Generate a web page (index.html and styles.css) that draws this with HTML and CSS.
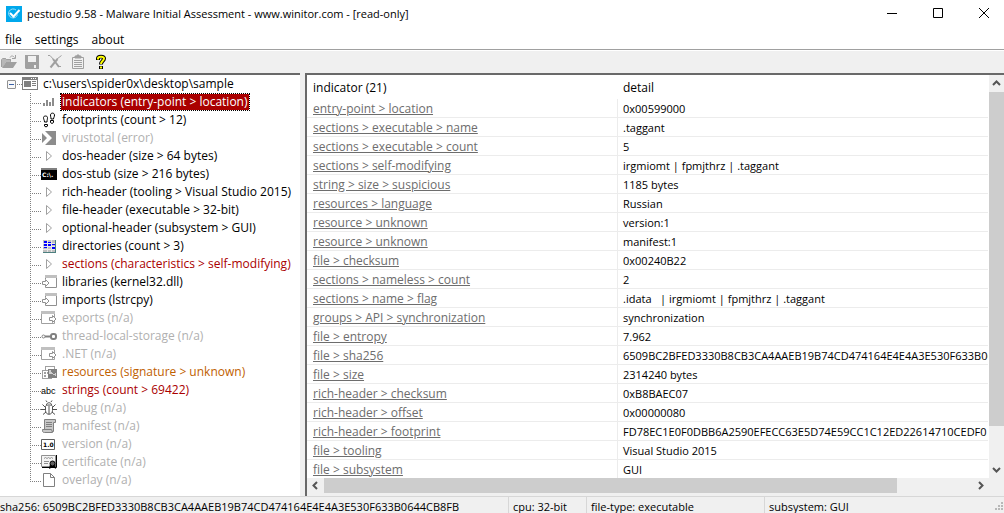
FILE: index.html
```
<!DOCTYPE html>
<html lang="en">
  <head>
    <meta charset="UTF-8" />
    <title>pestudio 9.58</title>
    <link rel="stylesheet" href="styles.css">
  </head>
  <body>
    <svg class="sprite" aria-hidden="true">
      <symbol id="arrow" viewBox="0 0 16 16">
        <path d="M5.5 3.500v9l5-4.500z" fill="#fff" stroke="#a0a0a0" />
      </symbol>
      <symbol id="import" viewBox="0 0 16 16">
        <path d="M4.500 5V2.500h11v11h-11V11" fill="#fff" stroke="#909090" />
        <path d="M4 1h12v3H4z" fill="#c0c0c0" shape-rendering="crispEdges" />
        <path d="M1.500 7.500h3v-2l3.500 3.500-3.500 3.500v-2h-3z" fill="#fff" stroke="#909090" />
      </symbol>
      <symbol id="export" viewBox="0 0 16 16">
        <path d="M.5 3v10.500h13V3" fill="#fff" stroke="#a0a0a0" />
        <path d="M0 1h14v3H0z" fill="#c0c0c0" shape-rendering="crispEdges" />
        <path d="M8.500 7.500h3v-2l3.500 3.500-3.500 3.500v-2h-3z" fill="#fff" stroke="#909090" />
      </symbol>
    </svg>

    <header class="titlebar">
      <svg class="logo" width="16" height="16" viewBox="0 0 16 16">
        <path d="M0 0h16v16H0z" fill="#00a8ec" />
        <path d="M11.500 8.500a4.500 4.500 0 1 1-1.500-4.500" fill="none" stroke="#9be0fa" />
        <path d="M4 7l3.500 3.500L13.500 4" fill="none" stroke="#fff" stroke-width="2" />
      </svg>
      <h1>pestudio 9.58 - Malware Initial Assessment - www.winitor.com - [read-only]</h1>
      <div class="window-buttons">
        <button type="button" aria-label="Minimize">
          <svg width="12" height="12" viewBox="0 0 12 12"><path d="M1 5.500h10" /></svg>
        </button>
        <button type="button" aria-label="Maximize">
          <svg width="12" height="12" viewBox="0 0 12 12"><path d="M1.500 .5h9v9h-9z" /></svg>
        </button>
        <button type="button" aria-label="Close">
          <svg width="12" height="12" viewBox="0 0 12 12"><path d="M1 0l10 10M11 0L1 10" /></svg>
        </button>
      </div>
    </header>

    <nav class="menu">
      <button type="button">file</button>
      <button type="button">settings</button>
      <button type="button">about</button>
    </nav>

    <div class="toolbar">
      <button type="button" aria-label="Open">
        <svg width="16" height="16" viewBox="0 0 16 16" fill="#a0a0a0">
          <path d="M1 13V5h1V4h3v1h5v3H5l-3 5z" fill="#b8b8b8" />
          <path d="M.5 13V5.500l1-1h3l1 1h4v2" fill="none" stroke="#a0a0a0" />
          <path d="M1 14l4-6h11l-4 6z" />
          <path d="M9 3.500c1-2 3-2 4.500 0M14.500 1v3.500H11" fill="none" stroke="#a0a0a0" />
        </svg>
      </button>
      <button type="button" aria-label="Save">
        <svg width="16" height="16" viewBox="0 0 16 16" fill="#a0a0a0">
          <path d="M1 1h14v14H2l-1-1z" />
          <path d="M4 2h8v6H4zM10 11h2v3h-2z" fill="#f0f0f0" />
        </svg>
      </button>
      <button type="button" aria-label="Delete">
        <svg width="16" height="16" viewBox="0 0 16 16" fill="none" stroke="#a0a0a0">
          <path d="M1 1.500h2l4 4.500M14.500 1.500L10 5" />
          <path d="M6 5l6 8M10.500 5L3.500 13.500" stroke-width="2" />
          <path d="M11 12.500h3" />
        </svg>
      </button>
      <button type="button" aria-label="Copy">
        <svg width="16" height="16" viewBox="0 0 16 16" fill="none" stroke="#a0a0a0">
          <path d="M2.500 3.500h11v11h-11z" />
          <path d="M5 2h6v2H5zM7 1h2v1H7z" fill="#a0a0a0" />
          <path d="M4 6.500h8M4 8.500h8M4 10.500h8M4 12.500h8" />
        </svg>
      </button>
      <button type="button" aria-label="Help">
        <svg width="16" height="16" viewBox="0 0 16 16" fill="none">
          <path d="M5 6V4.500C5 2 11 2 11 4.500 11 7 8 7 8 10.500M8 12v3" stroke="#000" stroke-width="4" />
          <path d="M5 5.500v-1C5 2 11 2 11 4.500 11 7 8 7 8 10M8 12.500v2" stroke="#ffff00" stroke-width="2" />
        </svg>
      </button>
    </div>

    <main class="workspace">
      <section class="tree-panel">
        <div class="tree-root">
          <button type="button" class="expander" aria-label="Collapse"></button>
          <svg width="16" height="16" viewBox="0 0 16 16" shape-rendering="crispEdges">
            <path d="M0 1h16v13H0z" fill="#808080" />
            <path d="M1 4h14v9H1z" fill="#fff" />
            <path d="M9 2h1v1H9zM11 2h1v1h-1zM13 2h1v1h-1z" fill="#fff" />
            <path d="M2 5h7v6H2zM10 5h4v1h-4zM10 7h4v1h-4zM10 9h4v1h-4z" fill="#808080" />
          </svg>
          <span class="label">c:\users\spider0x\desktop\sample</span>
        </div>
        <ul class="tree">
          <li class="selected">
            <svg viewBox="0 0 16 16" shape-rendering="crispEdges"><path d="M2 9h2v3H2zM5 6h2v6H5zM8 8h2v4H8zM11 4h2v8h-2z" fill="#8c8c8c" /></svg>
            <span class="label">indicators (entry-point &gt; location)</span>
          </li>
          <li>
            <svg viewBox="0 0 16 16" fill="#fff" stroke="#000">
              <path d="M2.500 5.500c0-2 4-2 4 0 0 2-.5 2.500-.5 4.500H3.500c0-2-1-2.500-1-4.500zM3.500 12.500h3v1.500c0 1-3 1-3 0zM9.500 3c0-2.500 4-2.500 4 0 0 2-1 2.500-1 4H10c0-2-.5-2-.5-4zM9.500 8.500h3v2c0 1-3 1-3 0z" />
            </svg>
            <span class="label">footprints (count &gt; 12)</span>
          </li>
          <li class="off">
            <svg viewBox="0 0 16 16"><path d="M1 1h14v14H1z" fill="#8c8c8c" /><path d="M1 1h3l7 7-7 7H1v-2l5-5-5-5z" fill="#fff" /></svg>
            <span class="label">virustotal (error)</span>
          </li>
          <li>
            <svg><use href="#arrow" /></svg>
            <span class="label">dos-header (size &gt; 64 bytes)</span>
          </li>
          <li>
            <svg viewBox="0 0 16 16">
              <path d="M0 2h16v12H0z" />
              <path d="M0 2h16v2H0z" fill="#808080" />
              <text class="prompt" x="1" y="11">C:\.</text>
            </svg>
            <span class="label">dos-stub (size &gt; 216 bytes)</span>
          </li>
          <li>
            <svg><use href="#arrow" /></svg>
            <span class="label">rich-header (tooling &gt; Visual Studio 2015)</span>
          </li>
          <li>
            <svg><use href="#arrow" /></svg>
            <span class="label">file-header (executable &gt; 32-bit)</span>
          </li>
          <li>
            <svg><use href="#arrow" /></svg>
            <span class="label">optional-header (subsystem &gt; GUI)</span>
          </li>
          <li>
            <svg viewBox="0 0 16 16" shape-rendering="crispEdges">
              <path d="M2 2h13v13H2z" fill="#4d8080" />
              <path d="M2 2h12v12H2z" fill="#c0c0c0" />
              <path d="M6 2h1v12H6zM10 2h1v12h-1zM2 5h12v1H2zM2 8h12v1H2zM2 11h12v1H2z" fill="#e8e8e8" />
              <path d="M3 3h3v2H3zM3 6h3v2H3zM7 4h3v1H7zM7 6h3v2H7zM3 9h3v1H3zM11 9h3v2h-3zM11 6h3v1h-3z" fill="#0000ff" />
            </svg>
            <span class="label">directories (count &gt; 3)</span>
          </li>
          <li class="alert">
            <svg><use href="#arrow" /></svg>
            <span class="label">sections (characteristics &gt; self-modifying)</span>
          </li>
          <li>
            <svg><use href="#import" /></svg>
            <span class="label">libraries (kernel32.dll)</span>
          </li>
          <li>
            <svg><use href="#import" /></svg>
            <span class="label">imports (lstrcpy)</span>
          </li>
          <li class="off">
            <svg><use href="#export" /></svg>
            <span class="label">exports (n/a)</span>
          </li>
          <li class="off">
            <svg viewBox="0 0 16 16" fill="#fff" stroke="#808080">
              <path d="M4 8.500h6" stroke-width="2" />
              <circle cx="2.500" cy="8.500" r="1.500" />
              <rect x="10" y="6" width="5" height="5" rx="2" stroke-width="2" />
            </svg>
            <span class="label">thread-local-storage (n/a)</span>
          </li>
          <li class="off">
            <svg><use href="#export" /></svg>
            <span class="label">.NET (n/a)</span>
          </li>
          <li class="warn">
            <svg viewBox="0 0 16 16" shape-rendering="crispEdges">
              <path d="M4.500 2.500h9v4h-9zM1.500 6.500h9v8h-9z" fill="#fff" stroke="#a0a0a0" />
              <path d="M3 8h2v2H3zM3 11h2v2H3zM6 8h1v2H6z" fill="#a0a0a0" />
              <path d="M7.500 5.500h8v8h-8z" fill="#d0d0d0" stroke="#808080" />
              <path d="M10 6h5v3l-2 1-3-2zM8 10h3l4 2v1H8z" fill="#808080" />
            </svg>
            <span class="label">resources (signature &gt; unknown)</span>
          </li>
          <li class="alert">
            <svg viewBox="0 0 16 16"><text class="abc" x="0" y="12">abc</text></svg>
            <span class="label">strings (count &gt; 69422)</span>
          </li>
          <li class="off">
            <svg viewBox="0 0 16 16" fill="none" stroke="#505050">
              <path d="M4.500 6.500c0-2 7-2 7 0v4c0 5-7 5-7 0zM5.500 5c0-3 5-3 5 0M8 6v8M6 2L5 .5M10 2l1-1.500M4 7L1.500 4.500M12 7l2.500-2.500M4 9.500H0M12 9.500h4M5 12l-3 2.500M11 12l3 2.500" />
            </svg>
            <span class="label">debug (n/a)</span>
          </li>
          <li class="off">
            <svg viewBox="0 0 16 16" fill="#c8c8c8" stroke="#808080">
              <path d="M3.500 1.500h11v3h-2v9h-9z" />
              <path d="M1.500 11.500h9l1 3h-8c-2 0-2-1-2-3z" />
              <path d="M5 4.500h6M5 6.500h6M5 8.500h6" />
            </svg>
            <span class="label">manifest (n/a)</span>
          </li>
          <li class="off">
            <svg viewBox="0 0 16 16"><path d="M.5 3.500h13v10H.5z" fill="#fff" stroke="#606060" /><text class="number" x="2" y="11">1.0</text></svg>
            <span class="label">version (n/a)</span>
          </li>
          <li class="off">
            <svg viewBox="0 0 16 16">
              <path d="M.5 1.500h14v11H.5z" fill="#f4f4f4" stroke="#909090" />
              <path d="M15.500 1v12.500H1" fill="none" stroke="#000" />
              <path d="M3 4.500l1.500-1L6 4.500l1.500-1L9 4.500l1.500-1L12 4.500M3 7.500h5M3 9.500h4" fill="none" stroke="#909090" />
              <path d="M8 15l1-5h5l1 5-3-2z" />
              <circle cx="11.500" cy="9.500" r="2.500" fill="#606060" stroke="#000" />
            </svg>
            <span class="label">certificate (n/a)</span>
          </li>
          <li class="off">
            <svg viewBox="0 0 16 16"><path d="M2.500 1.500h7l4 4v9h-11zM9.500 1.500v4h4" fill="#fff" stroke="#808080" /></svg>
            <span class="label">overlay (n/a)</span>
          </li>
        </ul>
      </section>

      <section class="data-panel">
        <div class="table-view">
          <table>
            <thead>
              <tr><th class="name">indicator (21)</th><th>detail</th></tr>
            </thead>
            <tbody>
              <tr><td><a href="#">entry-point &gt; location</a></td><td>0x00599000</td></tr>
              <tr><td><a href="#">sections &gt; executable &gt; name</a></td><td>.taggant</td></tr>
              <tr><td><a href="#">sections &gt; executable &gt; count</a></td><td>5</td></tr>
              <tr><td><a href="#">sections &gt; self-modifying</a></td><td>irgmiomt | fpmjthrz | .taggant</td></tr>
              <tr><td><a href="#">string &gt; size &gt; suspicious</a></td><td>1185 bytes</td></tr>
              <tr><td><a href="#">resources &gt; language</a></td><td>Russian</td></tr>
              <tr><td><a href="#">resource &gt; unknown</a></td><td>version:1</td></tr>
              <tr><td><a href="#">resource &gt; unknown</a></td><td>manifest:1</td></tr>
              <tr><td><a href="#">file &gt; checksum</a></td><td>0x00240B22</td></tr>
              <tr><td><a href="#">sections &gt; nameless &gt; count</a></td><td>2</td></tr>
              <tr><td><a href="#">sections &gt; name &gt; flag</a></td><td>.idata   | irgmiomt | fpmjthrz | .taggant</td></tr>
              <tr><td><a href="#">groups &gt; API &gt; synchronization</a></td><td>synchronization</td></tr>
              <tr><td><a href="#">file &gt; entropy</a></td><td>7.962</td></tr>
              <tr><td><a href="#">file &gt; sha256</a></td><td>6509BC2BFED3330B8CB3CA4AAEB19B74CD474164E4E4A3E530F633B0644CB8FB</td></tr>
              <tr><td><a href="#">file &gt; size</a></td><td>2314240 bytes</td></tr>
              <tr><td><a href="#">rich-header &gt; checksum</a></td><td>0xB8BAEC07</td></tr>
              <tr><td><a href="#">rich-header &gt; offset</a></td><td>0x00000080</td></tr>
              <tr><td><a href="#">rich-header &gt; footprint</a></td><td>FD78EC1E0F0DBB6A2590EFECC63E5D74E59CC1C12ED22614710CEDF0</td></tr>
              <tr><td><a href="#">file &gt; tooling</a></td><td>Visual Studio 2015</td></tr>
              <tr><td><a href="#">file &gt; subsystem</a></td><td>GUI</td></tr>
            </tbody>
          </table>
        </div>
        <div class="scrollbar vertical">
          <button type="button" aria-label="Scroll up"><svg viewBox="0 0 9 9"><path d="M1 6l3.500-3.500L8 6" /></svg></button>
          <div class="thumb"></div>
          <button type="button" aria-label="Scroll down"><svg viewBox="0 0 9 9"><path d="M1 3l3.500 3.500L8 3" /></svg></button>
        </div>
        <div class="scrollbar horizontal">
          <button type="button" aria-label="Scroll left"><svg viewBox="0 0 9 9"><path d="M6 1L2.500 4.500 6 8" /></svg></button>
          <div class="thumb"></div>
          <button type="button" aria-label="Scroll right"><svg viewBox="0 0 9 9"><path d="M3 1l3.500 3.500L3 8" /></svg></button>
        </div>
      </section>
    </main>

    <footer class="statusbar">
      <span>sha256: 6509BC2BFED3330B8CB3CA4AAEB19B74CD474164E4E4A3E530F633B0644CB8FB</span>
      <span>cpu: 32-bit</span>
      <span>file-type: executable</span>
      <span>subsystem: GUI</span>
      <svg class="grip" width="12" height="12" viewBox="0 0 12 12" fill="#b8b8b8"><path d="M9 1h2v2H9zM6 4h2v2H6zM9 4h2v2H9zM3 7h2v2H3zM6 7h2v2H6zM9 7h2v2H9z" /></svg>
    </footer>
  </body>
</html>
```
FILE: styles.css
```
* {
  box-sizing: border-box;
}

body {
  margin: 0;
  height: 100vh;
  display: flex;
  flex-direction: column;
  overflow: hidden;
  background-color: #f0f0f0;
  color: #000;
  font-family: "Segoe UI", "Open Sans", sans-serif;
  font-size: 12px;
  line-height: 18px;
}

button {
  margin: 0;
  padding: 0;
  border: 0;
  background: none;
  color: inherit;
  font: inherit;
}

svg {
  display: block;
  flex: none;
}

.sprite {
  display: none;
}

.titlebar {
  display: flex;
  align-items: center;
  height: 28px;
  padding-left: 6px;
  background-color: #fff;
}

.titlebar h1 {
  margin: 0;
  padding-left: 5px;
  flex: 1;
  font-size: 11px;
  font-weight: normal;
}

.window-buttons {
  display: flex;
  gap: 6px;
}

.window-buttons button {
  width: 40px;
  height: 28px;
  display: flex;
  align-items: center;
  justify-content: center;
}

.window-buttons path {
  fill: none;
  stroke: #000;
}

.menu {
  display: flex;
  gap: 13px;
  height: 21px;
  padding: 2px 5px 0;
  background-color: #fff;
}

.toolbar {
  display: flex;
  align-items: center;
  gap: 7px;
  height: 24px;
  padding-left: 1px;
  border-top: 1px solid #a0a0a0;
  box-shadow: inset 0 1px #fff;
}

.workspace {
  display: flex;
  flex: 1;
  min-height: 0;
  gap: 5px;
}

.tree-panel {
  width: 300px;
  background-color: #fff;
  border-top: 2px solid #696969;
  overflow: hidden;
}

.tree-root {
  display: flex;
  align-items: center;
  height: 18px;
  padding-left: 7px;
}

.tree-root::before {
  content: "";
  order: 1;
  width: 6px;
  height: 1px;
  background: repeating-linear-gradient(90deg, transparent 0 1px, #808080 1px 2px);
}

.tree-root svg,
.tree-root .label {
  order: 2;
}

.expander {
  width: 9px;
  height: 9px;
  border: 1px solid #919191;
  border-radius: 1px;
  background: linear-gradient(#3a61a8, #3a61a8) center / 5px 1px no-repeat #f8f8f8;
}

.tree {
  margin: 0;
  padding: 0 0 0 30px;
  list-style: none;
}

.tree li {
  display: flex;
  align-items: center;
  height: 18px;
}

/* dotted connector lines */
.tree li::before {
  content: "";
  align-self: stretch;
  width: 11px;
  background:
    repeating-linear-gradient(#808080 0 1px, transparent 1px 2px) 0 0 / 1px 100% no-repeat,
    repeating-linear-gradient(90deg, #808080 0 1px, transparent 1px 2px) 0 10px / 100% 1px no-repeat;
}

.tree li:last-child::before {
  height: 11px;
  align-self: flex-start;
}

.tree svg {
  width: 16px;
  height: 16px;
}

.label {
  margin-left: 4px;
  padding: 0 1px;
  height: 16px;
  line-height: 16px;
  white-space: nowrap;
}

.selected .label {
  background-color: #aa0000;
  color: #fff;
  outline: 1px dotted #000;
}

.off {
  color: #b0b0b0;
}

.alert {
  color: #aa0000;
}

.warn {
  color: #c06000;
}

.prompt {
  font: bold 6px "DejaVu Sans", sans-serif;
  fill: #fff;
}

.number {
  font: bold 6px "DejaVu Sans", sans-serif;
}

.abc {
  font: 9px "Liberation Sans", sans-serif;
}

.data-panel {
  flex: 1;
  min-width: 0;
  display: grid;
  grid-template-columns: minmax(0, 1fr) 15px;
  grid-template-rows: minmax(0, 1fr) 15px 3px;
  border-top: 2px solid #696969;
  border-left: 2px solid #696969;
}

.table-view {
  overflow: hidden;
  background-color: #fff;
  padding-right: 1px;
}

table {
  width: 100%;
  table-layout: fixed;
  border-collapse: separate;
  border-spacing: 0;
}

th,
td {
  height: 19px;
  padding: 2px 5px 0;
  border-bottom: 1px solid #ececec;
  line-height: 16px;
  text-align: left;
  font-weight: normal;
  white-space: pre;
  overflow: hidden;
}

td:first-child {
  padding-left: 6px;
  border-right: 1px solid #ececec;
}

td:last-child {
  padding-right: 0;
  font-size: 11px;
}

th {
  height: 24px;
  border-bottom: 0;
}

th.name {
  width: 311px;
  padding-left: 6px;
}

td a {
  color: #6d6d6d;
}

.scrollbar {
  display: flex;
  justify-content: space-between;
}

.scrollbar button {
  flex: none;
  width: 17px;
  height: 15px;
  display: flex;
  align-items: center;
  justify-content: center;
}

.scrollbar svg {
  width: 9px;
  height: 9px;
}

.scrollbar path {
  fill: none;
  stroke: #555;
  stroke-width: 2;
}

.thumb {
  background-color: #cdcdcd;
}

.vertical {
  flex-direction: column;
}

.vertical button {
  width: 15px;
  height: 17px;
}

.vertical .thumb {
  height: 83%;
  margin-bottom: auto;
}

.horizontal .thumb {
  width: 84%;
  margin-right: auto;
}

.statusbar {
  display: flex;
  height: 17px;
  border-top: 1px solid #d7d7d7;
  font-size: 11px;
  white-space: nowrap;
}

.statusbar span {
  padding: 0 4px;
  border-left: 1px solid #d7d7d7;
  width: 78px;
  line-height: 20px;
}

.statusbar span:first-child {
  width: 508px;
  padding: 0;
  border: 0;
}

.statusbar span:nth-child(3) {
  width: 178px;
}

.statusbar span:nth-child(4) {
  flex: 1;
}

.grip {
  align-self: flex-end;
}
```
